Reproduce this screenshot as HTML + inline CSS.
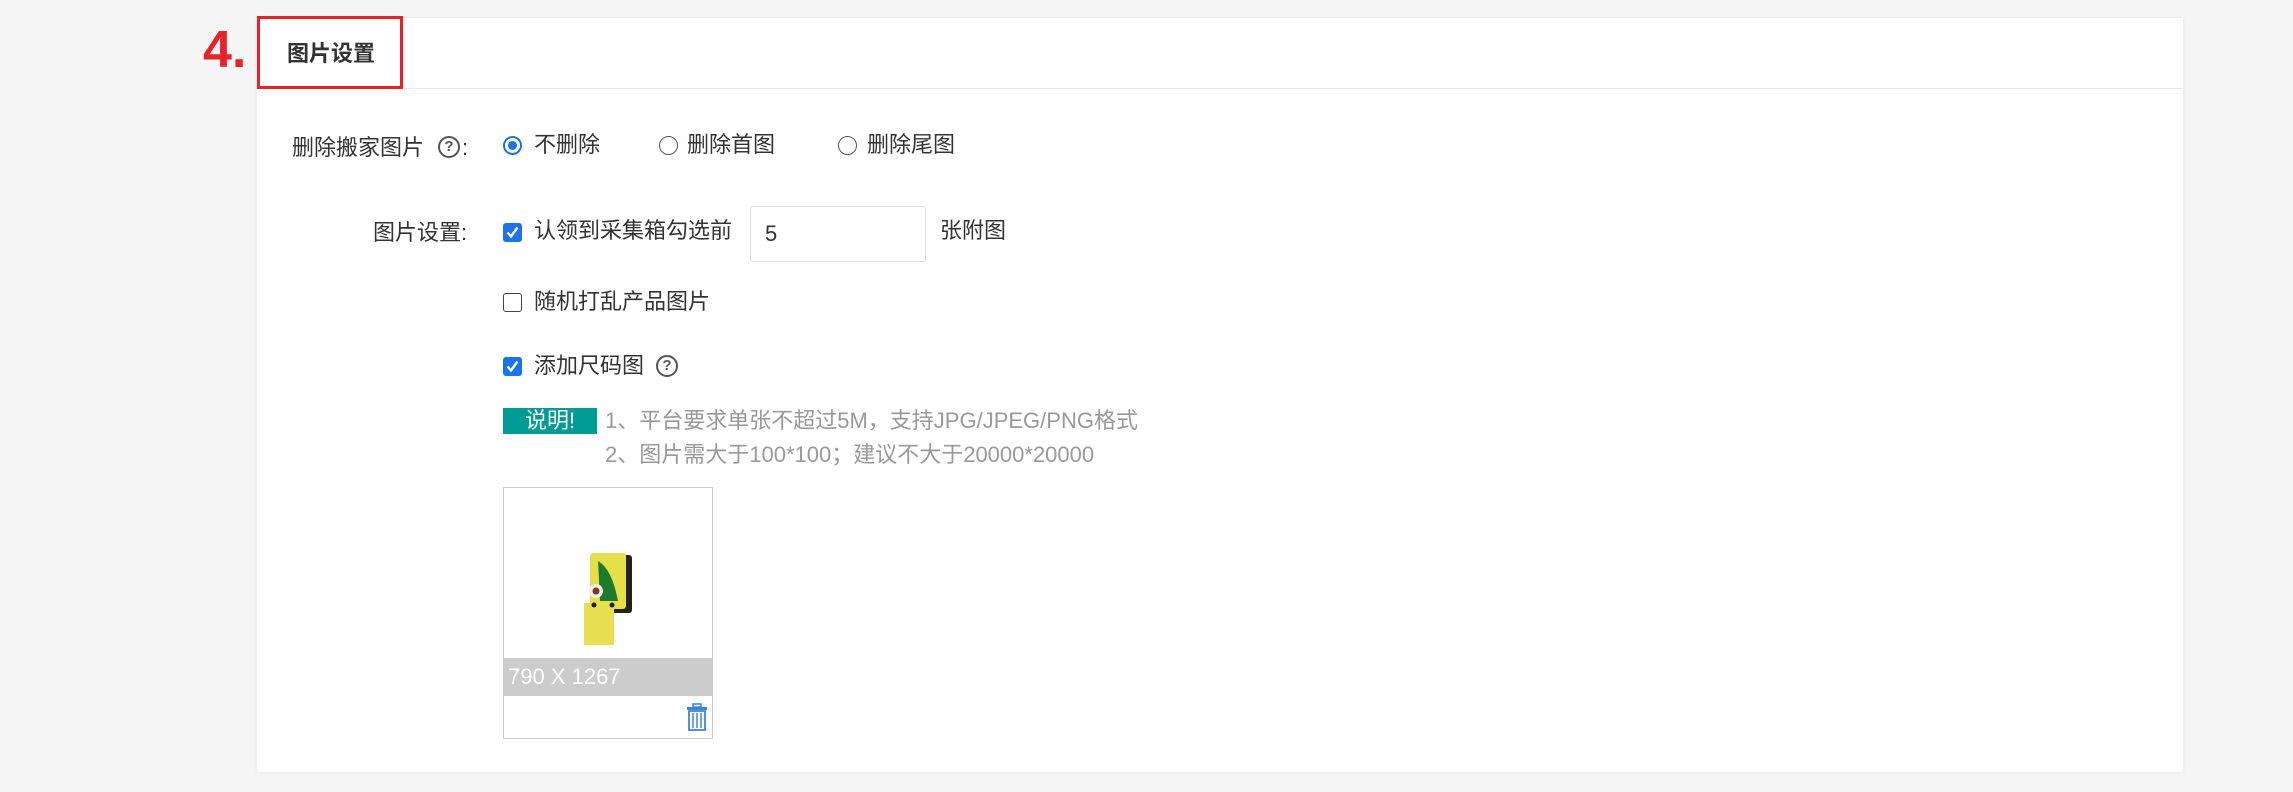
<!DOCTYPE html>
<html><head><meta charset="utf-8"><style>
*{margin:0;padding:0;box-sizing:border-box}
body{width:2293px;height:792px;background:#f5f5f5;font-family:"Liberation Sans","Noto Sans CJK SC",sans-serif;color:#333;position:relative;overflow:hidden}
.card{position:absolute;left:257px;top:18px;width:1926px;height:754px;background:#fff;box-shadow:0 0 3px rgba(0,0,0,.08)}
.hline{position:absolute;left:0;right:0;top:70px;border-top:1px solid #e8e8e8}
.red{position:absolute;left:257px;top:16px;width:146px;height:73px;border:3px solid #e8212b}
.four{position:absolute;left:203px;top:20px;font-size:52px;font-weight:bold;color:#e8212b}
.t{position:absolute;font-size:22px;white-space:nowrap;line-height:26px}
.title{font-weight:bold;font-size:22px}
.radio{position:absolute;width:19px;height:19px;border:1.5px solid #555;border-radius:50%}
.radio.on{border:2px solid #1a73e8}
.radio.on::after{content:"";position:absolute;left:3px;top:3px;width:9px;height:9px;border-radius:50%;background:#1a73e8}
.cb{position:absolute;width:19px;height:19px;border-radius:3px}
.cb.on{background:#1a73e8}
.cb.off{border:1.5px solid #444}
.q{position:absolute;width:22px;height:22px;border:2px solid #555;border-radius:50%;font-size:15px;font-weight:bold;text-align:center;line-height:18px;color:#555}
.gray{color:#999}
</style></head><body>
<div class="card"><div class="hline"></div></div>
<div class="red"></div>
<div class="four">4.</div>
<div class="t title" style="left:287px;top:41px">图片设置</div>

<div class="t" style="left:292px;top:135px">删除搬家图片</div>
<div class="q" style="left:438px;top:136px">?</div>
<div class="t" style="left:462px;top:135px">:</div>
<div class="radio on" style="left:503px;top:136px"></div>
<div class="t" style="left:534px;top:132px">不删除</div>
<div class="radio" style="left:659px;top:136px"></div>
<div class="t" style="left:687px;top:132px">删除首图</div>
<div class="radio" style="left:838px;top:136px"></div>
<div class="t" style="left:867px;top:132px">删除尾图</div>

<div class="t" style="left:373px;top:220px">图片设置:</div>
<div class="cb on" style="left:503px;top:223px"><svg width="19" height="19"><path d="M4.5 9.5l3.5 4 6.5-9" stroke="#fff" stroke-width="2.4" fill="none"/></svg></div>
<div class="t" style="left:534px;top:218px">认领到采集箱勾选前</div>
<div style="position:absolute;left:750px;top:206px;width:176px;height:56px;border:1px solid #ddd;border-radius:3px"></div>
<div class="t" style="left:765px;top:221px">5</div>
<div class="t" style="left:940px;top:218px">张附图</div>

<div class="cb off" style="left:503px;top:293px"></div>
<div class="t" style="left:534px;top:289px">随机打乱产品图片</div>

<div class="cb on" style="left:503px;top:357px"><svg width="19" height="19"><path d="M4.5 9.5l3.5 4 6.5-9" stroke="#fff" stroke-width="2.4" fill="none"/></svg></div>
<div class="t" style="left:534px;top:353px">添加尺码图</div>
<div class="q" style="left:656px;top:355px">?</div>

<div style="position:absolute;left:503px;top:408px;width:94px;height:26px;background:#009b95;color:#fff;font-size:22px;line-height:26px;text-align:center">说明!</div>
<div class="t gray" style="left:605px;top:408px">1、平台要求单张不超过5M，支持JPG/JPEG/PNG格式</div>
<div class="t gray" style="left:605px;top:442px">2、图片需大于100*100；建议不大于20000*20000</div>

<div style="position:absolute;left:503px;top:487px;width:210px;height:252px;border:1px solid #ccc;background:#fff">
  <div style="position:absolute;left:0;right:0;top:170px;height:38px;background:#ccc;color:#fff;font-size:22px;line-height:38px;padding-left:4px">790 X 1267</div>
  <svg style="position:absolute;left:78px;top:65px" width="64" height="94">
    <rect x="12" y="2" width="38" height="58" rx="3" fill="#222"/>
    <rect x="8" y="0" width="36" height="56" rx="3" fill="#e5df4a"/>
    <path d="M16 8 q14 8 20 40 h-18z" fill="#1f7a2a"/>
    <circle cx="14" cy="38" r="7" fill="#eee"/><circle cx="14" cy="38" r="3.5" fill="#7a3a1a"/>
    <rect x="2" y="50" width="30" height="42" fill="#e8e050"/>
    <circle cx="12" cy="52" r="2.5" fill="#222"/><circle cx="30" cy="52" r="2.5" fill="#222"/>
  </svg>
  <svg style="position:absolute;left:182px;top:215px" width="22" height="28" viewBox="0 0 22 28">
    <rect x="7" y="1" width="8" height="3" fill="none" stroke="#3d86d8" stroke-width="1.6"/>
    <rect x="1" y="4" width="20" height="3" fill="#3d86d8"/>
    <rect x="3" y="8" width="16" height="19" fill="none" stroke="#3d86d8" stroke-width="1.8"/>
    <path d="M7 10v15M11 10v15M15 10v15" stroke="#3d86d8" stroke-width="1.5"/>
  </svg>
</div>
</body></html>
